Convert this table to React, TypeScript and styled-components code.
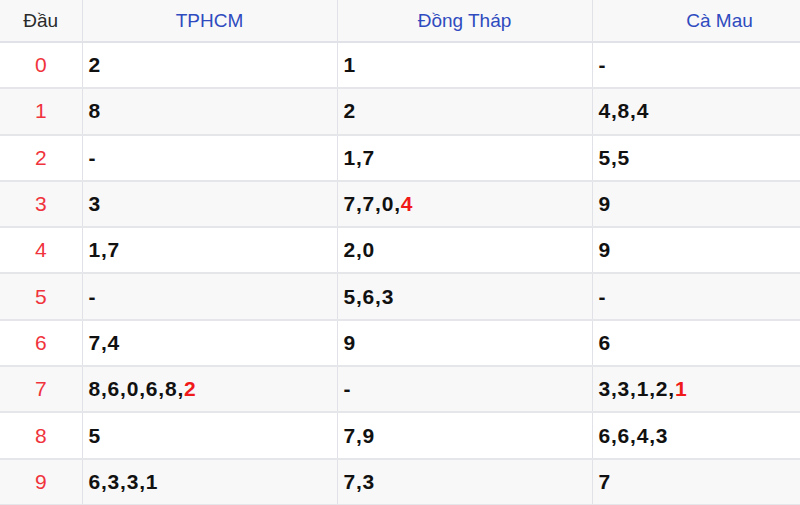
import React from 'react'
import styled, { createGlobalStyle } from 'styled-components'

const GlobalStyle = createGlobalStyle`
  html, body {
    margin: 0;
    padding: 0;
    background: #fff;
  }
  body {
    font-family: Arial, 'Liberation Sans', sans-serif;
  }
`

type Value = { digits: string[]; hot?: boolean }

const provinces = ['TPHCM', 'Đồng Tháp', 'Cà Mau']

// each row: one entry per province; last digit red when hot
const rows: Value[][] = [
  [{ digits: ['2'] }, { digits: ['1'] }, { digits: [] }],
  [{ digits: ['8'] }, { digits: ['2'] }, { digits: ['4', '8', '4'] }],
  [{ digits: [] }, { digits: ['1', '7'] }, { digits: ['5', '5'] }],
  [{ digits: ['3'] }, { digits: ['7', '7', '0', '4'], hot: true }, { digits: ['9'] }],
  [{ digits: ['1', '7'] }, { digits: ['2', '0'] }, { digits: ['9'] }],
  [{ digits: [] }, { digits: ['5', '6', '3'] }, { digits: [] }],
  [{ digits: ['7', '4'] }, { digits: ['9'] }, { digits: ['6'] }],
  [{ digits: ['8', '6', '0', '6', '8', '2'], hot: true }, { digits: [] }, { digits: ['3', '3', '1', '2', '1'], hot: true }],
  [{ digits: ['5'] }, { digits: ['7', '9'] }, { digits: ['6', '6', '4', '3'] }],
  [{ digits: ['6', '3', '3', '1'] }, { digits: ['7', '3'] }, { digits: ['7'] }],
]

function Cell({ value }: { value: Value }) {
  if (!value.digits.length) return <ValueCell>-</ValueCell>
  const head = value.hot ? value.digits.slice(0, -1) : value.digits
  const last = value.hot ? value.digits[value.digits.length - 1] : null
  return (
    <ValueCell>
      {head.join(',')}
      {last !== null && (
        <>
          {head.length ? ',' : ''}
          <Hot>{last}</Hot>
        </>
      )}
    </ValueCell>
  )
}

export default function App() {
  return (
    <>
      <GlobalStyle />
      <Frame>
        <Table>
          <colgroup>
            <col style={{ width: 82 }} />
            <col style={{ width: 255 }} />
            <col style={{ width: 255 }} />
            <col style={{ width: 255 }} />
          </colgroup>
          <thead>
            <tr>
              <HeadCell $plain>Đầu</HeadCell>
              {provinces.map(p => (
                <HeadCell key={p}>{p}</HeadCell>
              ))}
            </tr>
          </thead>
          <tbody>
            {rows.map((row, i) => (
              <Row key={i} $shaded={i % 2 === 1}>
                <HeadNumber>{i}</HeadNumber>
                {row.map((v, j) => (
                  <Cell key={j} value={v} />
                ))}
              </Row>
            ))}
          </tbody>
        </Table>
      </Frame>
    </>
  )
}

const Frame = styled.div`
  width: 800px;
  height: 505px;
  overflow: hidden;
`

const Table = styled.table`
  width: 847px;
  border-collapse: collapse;
  table-layout: fixed;
  font-family: Arial, 'Liberation Sans', sans-serif;
`

const HeadCell = styled.th<{ $plain?: boolean }>`
  height: 42px;
  padding: 0;
  box-sizing: border-box;
  background: #f8f8f8;
  border-right: 1px solid #e1e2e8;
  border-bottom: 2px solid #e1e2e8;
  color: ${p => (p.$plain ? '#2a2a2a' : '#2f4bbf')};
  font-size: 19px;
  font-weight: normal;
  text-align: center;
  vertical-align: middle;
`

const Row = styled.tr<{ $shaded: boolean }>`
  height: 46.3px;
  background: ${p => (p.$shaded ? '#f8f8f8' : '#fff')};

  > td {
    border-right: 1px solid #e1e2e8;
    border-bottom: 2px solid #e5e6ea;
    padding: 0;
    vertical-align: middle;
  }
`

const HeadNumber = styled.td`
  color: #f0333c;
  font-size: 21px;
  text-align: center;
`

const ValueCell = styled.td`
  && {
    padding-left: 6px;
  }
  color: #111;
  font-size: 21px;
  font-weight: bold;
  letter-spacing: 0.8px;
`

const Hot = styled.span`
  color: #f01a1a;
`
